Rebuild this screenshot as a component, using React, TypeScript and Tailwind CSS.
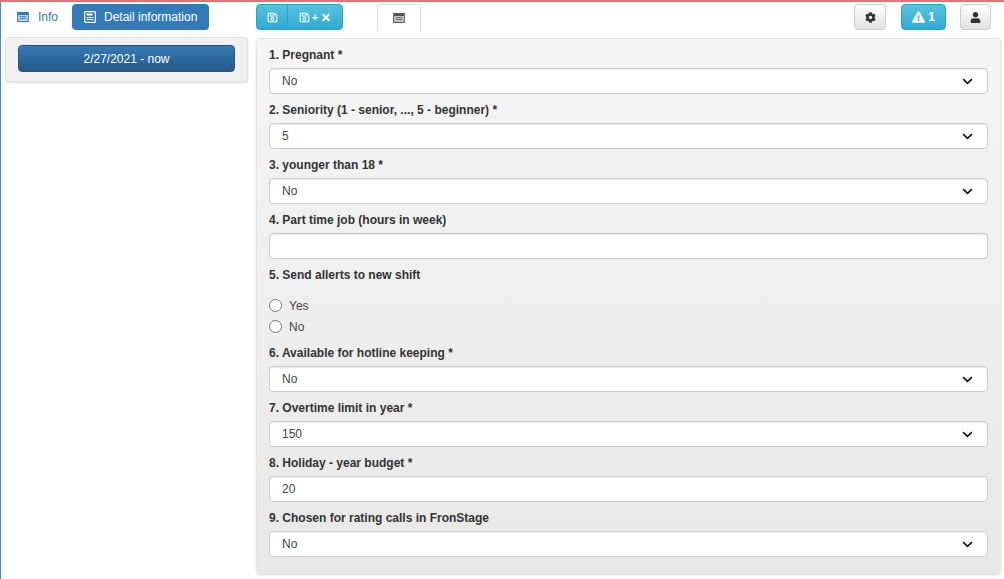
import { FaCog, FaExclamationTriangle, FaRegSave, FaTimes, FaUser } from "react-icons/fa";

type Field = {
    label: string;
    value: string;
    kind: "select" | "input";
};

function ListIcon({ className }: { className: string }) {
    return (
        <svg viewBox="0 0 14 12" className={className} fill="currentColor">
            <path d="M0 0h14v12H0z M1.2 3.5v7.3h11.6V3.5z" fillRule="evenodd" />
            <path d="M1.2 3.5h11.6v7.3H1.2z" opacity="0.35" />
            <path d="M3 5h8v1H3z M3 7.5h8v1H3z" />
        </svg>
    );
}

function DetailIcon() {
    return (
        <svg viewBox="0 0 12 12" className="w-[12px] h-[12px] text-white" fill="currentColor">
            <path d="M1 0h10l1 1v10l-1 1H1l-1-1V1z M1.2 1.2v9.6h9.6V1.2z" fillRule="evenodd" />
            <path d="M2.5 2.5h6v2h-6z M2.5 6h7v1h-7z M2.5 8h7v1h-7z" />
        </svg>
    );
}

function Chevron() {
    return (
        <svg viewBox="0 0 12 8" className="w-[11px] h-[7px]" fill="none" stroke="#111" strokeWidth="1.9">
            <path d="M1 1.2 L6 6 L11 1.2" />
        </svg>
    );
}

function FormControl({ value, kind }: Field) {
    return (
        <div className="flex items-center justify-between h-[26px] bg-white border border-[#cccccc] rounded-[4px] pl-3 pr-[14px] text-[12px] text-[#444] shadow-[inset_0_1px_1px_rgba(0,0,0,0.075)]">
            <span>{value}</span>
            {kind === "select" && <Chevron />}
        </div>
    );
}

function FormField(field: Field) {
    return (
        <div className="mb-[9px]">
            <div className="h-[14px] mb-[6px] flex items-center text-[12px] font-bold text-[#333] leading-none">{field.label}</div>
            <FormControl {...field} />
        </div>
    );
}

function Radio({ label }: { label: string }) {
    return (
        <div className="flex items-center h-[21px] text-[12px] text-[#444]">
            <span className="w-[13px] h-[13px] rounded-full border border-[#767676] bg-white mr-[7px]" />
            {label}
        </div>
    );
}

const before: Field[] = [
    { label: "1. Pregnant *", value: "No", kind: "select" },
    { label: "2. Seniority (1 - senior, ..., 5 - beginner) *", value: "5", kind: "select" },
    { label: "3. younger than 18 *", value: "No", kind: "select" },
    { label: "4. Part time job (hours in week)", value: "", kind: "input" },
];

const after: Field[] = [
    { label: "6. Available for hotline keeping *", value: "No", kind: "select" },
    { label: "7. Overtime limit in year *", value: "150", kind: "select" },
    { label: "8. Holiday - year budget *", value: "20", kind: "input" },
    { label: "9. Chosen for rating calls in FronStage", value: "No", kind: "select" },
];

const cyanButton = "bg-gradient-to-b from-[#5bc0de] to-[#2aabd2] border border-[#28a4c9] text-white";
const greyButton = "bg-gradient-to-b from-white to-[#e0e0e0] border border-[#cccccc] text-[#333]";

export default function App() {
    return (
        <div className="w-[1004px] h-[579px] overflow-hidden bg-white font-['Liberation_Sans',Arial,sans-serif] flex flex-col">
            <div className="h-[2px] bg-[#e57373] shrink-0" />
            <div className="flex flex-1 min-h-0 border-l border-[#3f8fd8]">
                {/* left column */}
                <div className="w-[255px] shrink-0 pl-[4px] pr-[8px]">
                    <div className="flex items-center h-[26px] mt-[2px] text-[12px]">
                        <div className="flex items-center w-[67px] pl-[12px] text-[#337ab7]">
                            <ListIcon className="w-[12px] h-[10px] mr-[9px] text-[#337ab7]" />
                            Info
                        </div>
                        <div className="flex items-center h-[26px] w-[137px] pl-[12px] rounded-[4px] bg-[#337ab7] text-white">
                            <DetailIcon />
                            <span className="ml-[8px]">Detail information</span>
                        </div>
                    </div>
                    <div className="mt-[7px] h-[45px] bg-[#f1f1f1] border border-[#e3e3e3] rounded-[4px] shadow-[0_1px_2px_rgba(0,0,0,0.15)] px-3 pt-[7px]">
                        <div className="flex items-center justify-center h-[27px] rounded-[4px] bg-gradient-to-b from-[#337ab7] to-[#265a88] border border-[#245580] text-white text-[12px]">
                            2/27/2021 - now
                        </div>
                    </div>
                </div>

                {/* right column */}
                <div className="flex-1 min-w-0 flex flex-col pr-[3px]">
                    <div className="flex items-start h-[34px] shrink-0 pt-[2px] relative">
                        <div className={`flex h-[26px] rounded-[4px] ${cyanButton}`}>
                            <div className="w-[31px] flex items-center justify-center border-r border-[#28a4c9]">
                                <FaRegSave className="w-[11px] h-[11px]" />
                            </div>
                            <div className="w-[54px] flex items-center justify-center gap-[2px] text-[11px] font-bold leading-none">
                                <FaRegSave className="w-[11px] h-[11px]" />
                                +
                                <FaTimes className="w-[10px] h-[11px] ml-[1px]" />
                            </div>
                        </div>
                        <div className="ml-[34px] w-[44px] h-[27px] border-t border-x border-[#dddddd] rounded-t-[4px] flex items-center justify-center">
                            <ListIcon className="w-[12px] h-[10px] text-[#555]" />
                        </div>
                        <div className="ml-auto mr-[10px] flex items-center gap-[15px]">
                            <div className={`w-[32px] h-[26px] rounded-[4px] flex items-center justify-center ${greyButton}`}>
                                <FaCog className="w-[11px] h-[11px]" />
                            </div>
                            <div className={`w-[45px] h-[26px] rounded-[4px] flex items-center justify-center gap-[3px] text-[12px] font-bold ${cyanButton}`}>
                                <FaExclamationTriangle className="w-[13px] h-[12px]" />
                                1
                            </div>
                            <div className={`w-[31px] h-[26px] rounded-[4px] flex items-center justify-center ml-[-1px] ${greyButton}`}>
                                <FaUser className="w-[11px] h-[11px]" />
                            </div>
                        </div>
                    </div>

                    <div className="mt-[2px] h-[536px] shrink-0 bg-gradient-to-b from-[#f5f5f5] to-[#e8e8e8] border border-[#e3e3e3] rounded-[4px] shadow-[0_1px_2px_rgba(0,0,0,0.15)] px-3 pt-[9px]">
                        {before.map((f) => (
                            <FormField key={f.label} {...f} />
                        ))}
                        <div className="h-[14px] flex items-center text-[12px] font-bold text-[#333] leading-none">5. Send allerts to new shift</div>
                        <div className="mt-[13px] mb-[9px]">
                            <Radio label="Yes" />
                            <Radio label="No" />
                        </div>
                        {after.map((f) => (
                            <FormField key={f.label} {...f} />
                        ))}
                    </div>
                </div>
            </div>
        </div>
    );
}
